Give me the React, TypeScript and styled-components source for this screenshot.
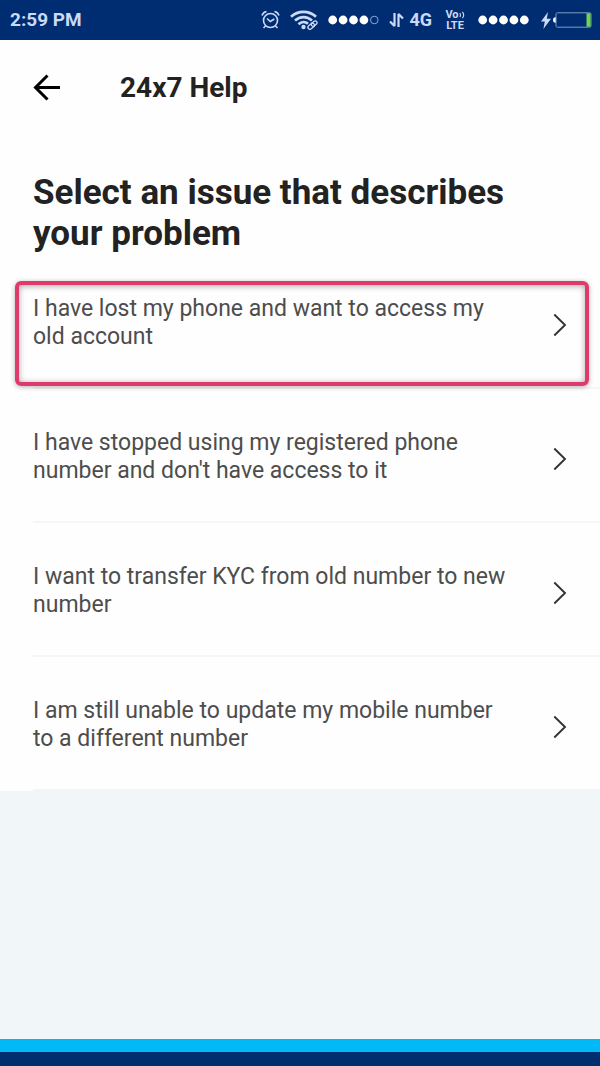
import React from 'react';
import styled, { createGlobalStyle } from 'styled-components';

const GlobalStyle = createGlobalStyle`
  * { box-sizing: border-box; }
  body {
    margin: 0;
    background: #f1f7f8;
    font-family: Roboto, "Liberation Sans", sans-serif;
  }
`;

const Page = styled.div`
  display: flex;
  flex-direction: column;
  min-height: 100vh;
`;

const StatusBar = styled.div`
  display: flex;
  align-items: center;
  justify-content: space-between;
  height: 40px;
  padding: 0 8px 0 10px;
  background: #002c72;
  color: #cbdaf6;
  font-size: 19px;
  font-weight: 700;
  line-height: 24px;
`;

const StatusGroup = styled.div<{ $gap: number }>`
  display: flex;
  align-items: center;
  gap: ${(p) => p.$gap}px;

  svg { display: block; flex: none; }
`;

const NetworkType = styled.span`
  font-size: 18px;
`;

const VoLte = styled.span`
  display: flex;
  flex-direction: column;
  align-items: center;
  width: 22px;
  font-size: 11px;
  line-height: 11px;
`;

const VoLteTop = styled.span`
  display: flex;
  align-items: center;
`;

const Screen = styled.main`
  background: #fefefe;
`;

const Header = styled.header`
  display: flex;
  align-items: center;
  gap: 58px;
  height: 96px;
  padding: 0 32px;
`;

const BackButton = styled.button`
  display: flex;
  padding: 0;
  border: 0;
  background: none;
  cursor: pointer;
`;

const Title = styled.h1`
  margin: 0;
  color: #222;
  font-size: 28px;
  font-weight: 700;
  line-height: 32px;
`;

const Heading = styled.h2`
  margin: 0;
  padding: 36px 33px 1px;
  color: #222;
  font-size: 35px;
  font-weight: 700;
  line-height: 41px;
`;

const IssueList = styled.ul`
  margin: 0;
  padding: 0 0 0 33px;
  list-style: none;
`;

const IssueItem = styled.li`
  position: relative;
  border-bottom: 2px solid #f5f6f6;

  &:last-child { border-bottom-color: #f1f7f8; }
`;

const IssueButton = styled.button`
  display: flex;
  align-items: center;
  justify-content: space-between;
  gap: 40px;
  width: 100%;
  min-height: 132px;
  padding: 4px 33px 0 0;
  border: 0;
  background: none;
  color: #4d4d4d;
  font-family: inherit;
  font-size: 23px;
  line-height: 28px;
  text-align: left;
  cursor: pointer;

  svg { flex: none; margin-top: 3px; }
`;

const Highlight = styled.span`
  position: absolute;
  inset: 26px 11px 1px -18px;
  border: 4px solid #e03a6c;
  border-radius: 6px;
  box-shadow: 0 1px 5px rgba(0, 0, 0, 0.3), inset 0 1px 6px rgba(0, 0, 0, 0.35);
  pointer-events: none;
`;

const Footer = styled.footer`
  height: 27px;
  margin-top: auto;
  border-top: 13px solid #00b9f5;
  background: #002e6e;
`;

const AlarmIcon = () => (
  <svg width="19" height="20" viewBox="0 0 19 20" fill="none" stroke="currentColor" strokeWidth="1.6" aria-hidden="true">
    <circle cx="9.5" cy="10.5" r="7" />
    <path d="M6 8.5l3.3 3 4-2.5M4.5 16l-2 2M14.5 16l2 2" />
    <path d="M1 5.5Q2 2.3 5.5 1.5M18 5.5Q17 2.3 13.5 1.5" />
  </svg>
);

const WifiIcon = () => (
  <svg width="28" height="20" viewBox="0 0 28 20" fill="none" stroke="currentColor" strokeWidth="2.7" aria-hidden="true">
    <path d="M1 6.8C8 .2 19 .2 26 6.8" />
    <path d="M5 10.6C10 6 17 6 22 10.6" />
    <path d="M8.5 14.2C11.5 11.4 15.5 11.4 18 13.8" />
    <circle cx="13.5" cy="17" r="2.2" fill="currentColor" stroke="none" />
    <g strokeWidth="1.3">
      <rect x="-3.6" y="-2" width="7.2" height="4" rx="2" transform="translate(21.2 16.2) rotate(-40)" />
      <rect x="-3.2" y="-1.8" width="6.4" height="3.6" rx="1.8" transform="translate(24.2 13.6) rotate(-40)" />
    </g>
  </svg>
);

const SignalDots = ({ filled }: { filled: number }) => (
  <svg width="51" height="10" viewBox="0 0 51 10" role="img" aria-label={`Signal ${filled} of 5`}>
    {[0, 1, 2, 3, 4].map((i) => (
      <circle
        key={i}
        cx={4.7 + i * 10.4}
        cy="5"
        r={i < filled ? 4.4 : 3.8}
        fill={i < filled ? '#fff' : 'none'}
        stroke={i < filled ? 'none' : '#8ea6d4'}
      />
    ))}
  </svg>
);

const DataArrows = () => (
  <svg width="15" height="16" viewBox="0 0 15 16" fill="none" stroke="currentColor" strokeWidth="2.2" aria-hidden="true">
    <path d="M5.5 1v13L1 9.5" strokeLinejoin="bevel" />
    <path d="M9.5 15V2l4.500 4.500" strokeLinejoin="bevel" />
  </svg>
);

const VoiceWaves = () => (
  <svg width="6" height="8" viewBox="0 0 6 8" fill="none" stroke="currentColor" strokeWidth="1.1" aria-hidden="true">
    <path d="M.8 2q1.4 2 0 4M3.4 .8q2.6 3.2 0 6.4" />
  </svg>
);

const BoltIcon = () => (
  <svg width="10" height="17" viewBox="0 0 10 17" fill="currentColor" aria-hidden="true">
    <path d="M7 0L0 9.4h3.8L2.4 17 10 6.8H5.8z" />
  </svg>
);

const BatteryIcon = () => (
  <svg width="40" height="16" viewBox="0 0 40 16" role="img" aria-label="Battery low, charging">
    <path d="M4 5.2H3Q1 5.5 1 8t2 2.8h1z" fill="#fff" />
    <rect x="4" y=".8" width="35" height="14.4" rx="1.5" fill="none" stroke="#7f9ac6" />
    <path d="M34.5 1.3H38.5V14.7H34.5z" fill="#6fd64a" />
  </svg>
);

const BackArrow = () => (
  <svg width="30" height="28" viewBox="0 0 30 28" fill="none" stroke="#000" strokeWidth="3" aria-hidden="true">
    <path d="M28 13.5H4M15.5 1.5L3.5 13.5l12 12" />
  </svg>
);

const Chevron = () => (
  <svg width="14" height="24" viewBox="0 0 14 24" fill="none" stroke="#333" strokeWidth="1.9" aria-hidden="true">
    <path d="M1.3 1.5L12 12 1.3 22.5" />
  </svg>
);

const issues = [
  { text: 'I have lost my phone and want to access my old account', highlighted: true },
  { text: "I have stopped using my registered phone number and don't have access to it" },
  { text: 'I want to transfer KYC from old number to new number' },
  { text: 'I am still unable to update my mobile number to a different number' },
];

export default function App() {
  return (
    <>
      <GlobalStyle />
      <Page>
        <StatusBar>
          <span>2:59 PM</span>
          <StatusGroup $gap={12}>
            <StatusGroup $gap={10}>
              <AlarmIcon />
              <WifiIcon />
              <SignalDots filled={4} />
              <StatusGroup $gap={5}>
                <DataArrows />
                <NetworkType>4G</NetworkType>
              </StatusGroup>
            </StatusGroup>
            <VoLte>
              <VoLteTop>
                Vo
                <VoiceWaves />
              </VoLteTop>
              <span>LTE</span>
            </VoLte>
            <SignalDots filled={5} />
            <StatusGroup $gap={1}>
              <BoltIcon />
              <BatteryIcon />
            </StatusGroup>
          </StatusGroup>
        </StatusBar>
        <Screen>
          <Header>
            <BackButton type="button" aria-label="Back">
              <BackArrow />
            </BackButton>
            <Title>24x7 Help</Title>
          </Header>
          <Heading>Select an issue that describes your problem</Heading>
          <IssueList>
            {issues.map((issue) => (
              <IssueItem key={issue.text}>
                <IssueButton type="button">
                  <span>{issue.text}</span>
                  <Chevron />
                </IssueButton>
                {issue.highlighted && <Highlight />}
              </IssueItem>
            ))}
          </IssueList>
        </Screen>
        <Footer />
      </Page>
    </>
  );
}
